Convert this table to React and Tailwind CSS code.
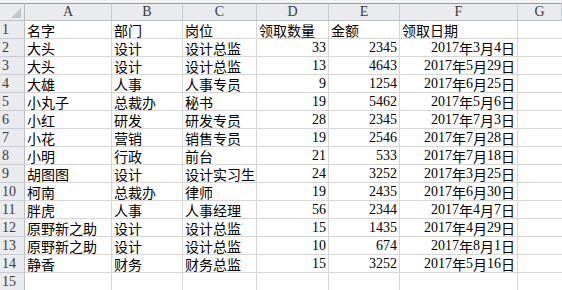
import React from "react";

const cols = ["A", "B", "C", "D", "E", "F", "G"];

const rows = [
  ["名字", "部门", "岗位", "领取数量", "金额", "领取日期"],
  ["大头", "设计", "设计总监", 33, 2345, "2017年3月4日"],
  ["大头", "设计", "设计总监", 13, 4643, "2017年5月29日"],
  ["大雄", "人事", "人事专员", 9, 1254, "2017年6月25日"],
  ["小丸子", "总裁办", "秘书", 19, 5462, "2017年5月6日"],
  ["小红", "研发", "研发专员", 28, 2345, "2017年7月3日"],
  ["小花", "营销", "销售专员", 19, 2546, "2017年7月28日"],
  ["小明", "行政", "前台", 21, 533, "2017年7月18日"],
  ["胡图图", "设计", "设计实习生", 24, 3252, "2017年3月25日"],
  ["柯南", "总裁办", "律师", 19, 2435, "2017年6月30日"],
  ["胖虎", "人事", "人事经理", 56, 2344, "2017年4月7日"],
  ["原野新之助", "设计", "设计总监", 15, 1435, "2017年4月29日"],
  ["原野新之助", "设计", "设计总监", 10, 674, "2017年8月1日"],
  ["静香", "财务", "财务总监", 15, 3252, "2017年5月16日"],
  ["", "", "", "", "", ""],
];

// latin digits are narrower (and seriffed) in the sheet font, render them as separate runs
function Txt({ s }) {
  return String(s)
    .split(/([0-9A-Za-z]+)/)
    .filter(Boolean)
    .map((p, i) =>
      /^[0-9A-Za-z]+$/.test(p) ? (
        <span key={i} className="font-['Liberation_Serif'] text-[14px]">
          {p}
        </span>
      ) : (
        <span key={i}>{p}</span>
      ),
    );
}

function Cell({ value, right }) {
  return (
    <div
      className={`flex h-[18px] items-center overflow-hidden whitespace-nowrap border-b border-r border-[#d6d6d6] bg-white px-[2px] pt-[1px] ${
        right ? "justify-end" : "justify-start"
      }`}
    >
      <Txt s={value} />
    </div>
  );
}

export default function App() {
  return (
    <div className="h-[290px] w-[562px] overflow-hidden bg-white font-['Noto_Sans_CJK_SC',sans-serif] text-[14px] leading-none text-black">
      <div className="h-[3px] bg-[#f1f2f4]" />
      <div className="grid grid-cols-[25px_87px_71px_74px_72px_71px_118px_1fr]">
        {/* column header */}
        <div className="relative h-[18px] border-b border-r border-t border-b-[#b9c0c8] border-r-[#b9c0c8] border-t-[#9a9a9a] bg-[#e9ebee]">
          <svg
            className="absolute bottom-[2px] right-[3px]"
            width="10"
            height="10"
            viewBox="0 0 10 10"
          >
            <polygon points="10,0 10,10 0,10" fill="#c3c6ca" />
          </svg>
        </div>
        {cols.map((c) => (
          <div
            key={c}
            className="flex h-[18px] items-center justify-center border-b border-r border-t border-b-[#b9c0c8] border-r-[#c7ccd2] border-t-[#9a9a9a] bg-[#e9ebee] font-['Liberation_Serif'] text-[14px] text-[#3b3b3b]"
          >
            {c}
          </div>
        ))}

        {rows.map((r, i) => (
          <React.Fragment key={i}>
            <div className="flex h-[18px] items-center border-b border-r border-b-[#c9cdd3] border-r-[#b9c0c8] bg-[#e9ebee] pl-[2px] pt-[1px] font-['Liberation_Serif'] text-[14px] text-[#3b3b3b]">
              {i + 1}
            </div>
            {r.map((v, j) => (
              <Cell key={j} value={v} right={i > 0 && j >= 3} />
            ))}
            <div className="h-[18px] border-b border-[#d6d6d6] bg-white" />
          </React.Fragment>
        ))}
      </div>
    </div>
  );
}
